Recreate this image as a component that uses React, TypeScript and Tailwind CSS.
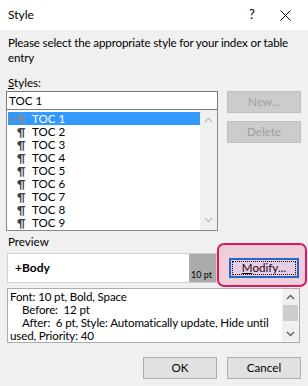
import React from 'react';

const rows = ['TOC 1', 'TOC 2', 'TOC 3', 'TOC 4', 'TOC 5', 'TOC 6', 'TOC 7', 'TOC 8', 'TOC 9'];

// Small chevron used in the scrollbars
const Chevron = ({ up, color }: { up?: boolean; color: string }) => (
  <svg width="9" height="6" viewBox="0 0 9 6" className="block">
    <path d={up ? 'M1 5 L4.5 1.5 L8 5' : 'M1 1 L4.5 4.5 L8 1'} fill="none" stroke={color} strokeWidth="1.4" />
  </svg>
);

const App: React.FC = () => {
  return (
    <div
      className="relative w-[308px] h-[386px] bg-[#f0f0f0] text-[11.6px] text-black overflow-hidden"
      style={{ fontFamily: 'Lato, "Noto Sans", sans-serif' }}
    >
      {/* Title bar */}
      <div className="h-[30px] bg-white flex items-center pl-[8px]">
        <span className="text-[12px]">Style</span>
        <span className="ml-auto w-[20px] text-center text-[13px]">?</span>
        <span className="w-[46px] flex justify-center">
          <svg width="11" height="11" viewBox="0 0 11 11">
            <path d="M0.5 0.5 L10.5 10.5 M10.5 0.5 L0.5 10.5" stroke="#000" strokeWidth="1" />
          </svg>
        </span>
      </div>

      <div className="px-[6px]">
        <p className="pt-[5px] leading-[15px] pl-[2px] tracking-[-0.15px]">
          Please select the appropriate style for your index or table entry
        </p>
        <div className="mt-[10px] leading-[15px] pl-[2px]">
          <span className="underline">S</span>tyles:
        </div>

        {/* Styles list + buttons */}
        <div className="flex mt-[1px]">
          <div className="w-[212px]">
            <div className="h-[19px] border border-[#7a7a7a] bg-white flex items-center pl-[2px] leading-none">
              TOC 1
            </div>
            <div className="h-[121px] border border-[#828790] border-t-0 bg-white flex">
              <div className="flex-1 pt-[2px] pl-[1px]">
                {rows.map((r, i) => (
                  <div
                    key={r}
                    className={`h-[13px] flex items-center leading-none ${i === 0 ? 'bg-[#3399ff] text-white' : ''}`}
                  >
                    <span className="w-[9px] flex justify-center">
                      {i === 0 && (
                        <svg width="4" height="6" viewBox="0 0 4 6">
                          <path d="M0 0 L4 3 L0 6 Z" fill="#808080" />
                        </svg>
                      )}
                    </span>
                    <span className={`w-[10px] mr-[5px] font-bold ${i === 0 ? 'text-[#8a8a8a]' : 'text-[#404040]'}`}>¶</span>
                    <span>{r}</span>
                  </div>
                ))}
              </div>
              <div className="w-[17px] bg-[#f0f0f0] flex flex-col items-center justify-between py-[7px]">
                <Chevron up color="#c0c0c0" />
                <Chevron color="#c0c0c0" />
              </div>
            </div>
          </div>

          <div className="ml-[9px] w-[74px] flex flex-col gap-[8px]">
            <div className="h-[22px] bg-[#cccccc] border border-[#bfbfbf] flex items-center justify-center text-[#a0a0a0]">
              New...
            </div>
            <div className="h-[22px] bg-[#cccccc] border border-[#bfbfbf] flex items-center justify-center text-[#a0a0a0]">
              Delete
            </div>
          </div>
        </div>

        {/* Preview */}
        <div className="mt-[3px] leading-[15px] pl-[2px]">Preview</div>
        <div className="flex items-center mt-[4px]">
          <div className="w-[210px] h-[30px] border border-[#cfcfcf] bg-white flex ml-[1px]">
            <div className="flex-1 flex items-center pl-[7px] font-bold text-[12px]">+Body</div>
            <div className="w-[27px] bg-[#ababab] flex items-end pl-[2px] pb-[1px] text-[9px] leading-[12px]">10 pt</div>
          </div>
          <div className="ml-[12px] w-[70px] h-[20px] border-2 border-[#0078d7] bg-[#e5f1fb] p-[1px]">
            <div className="w-full h-full border border-dotted border-black flex items-center justify-center leading-none">
              <span>
                <span className="underline">M</span>odify...
              </span>
            </div>
          </div>
        </div>

        {/* Description */}
        <div className="mt-[5px] ml-[1px] w-[293px] h-[55px] border border-[#adadad] bg-white flex">
          <div className="flex-1 pl-[2px] pt-[1px] leading-[13px] tracking-[-0.15px]">
            <div>Font: 10 pt, Bold, Space</div>
            <div className="pl-[12px]">Before:&nbsp; 12 pt</div>
            <div className="pl-[12px] whitespace-nowrap">After:&nbsp; 6 pt, Style: Automatically update, Hide until</div>
            <div>used, Priority: 40</div>
          </div>
          <div className="w-[17px] bg-[#f0f0f0] flex flex-col items-center py-[5px]">
            <Chevron up color="#606060" />
            <div className="w-[15px] h-[16px] bg-[#cdcdcd] mt-[5px]" />
            <div className="mt-auto">
              <Chevron color="#606060" />
            </div>
          </div>
        </div>

        {/* OK / Cancel */}
        <div className="flex justify-end gap-[10px] mt-[14px] pr-[1px]">
          <div className="w-[74px] h-[22px] bg-[#e1e1e1] border border-[#adadad] flex items-center justify-center">OK</div>
          <div className="w-[74px] h-[22px] bg-[#e1e1e1] border border-[#adadad] flex items-center justify-center">Cancel</div>
        </div>
      </div>

      {/* Highlight annotation around Modify button */}
      <div className="absolute left-[217px] top-[243px] w-[90px] h-[44px] rounded-[7px] border-2 border-[#e0195f] bg-[#e8106a]/15" />
    </div>
  );
};

export default App;
